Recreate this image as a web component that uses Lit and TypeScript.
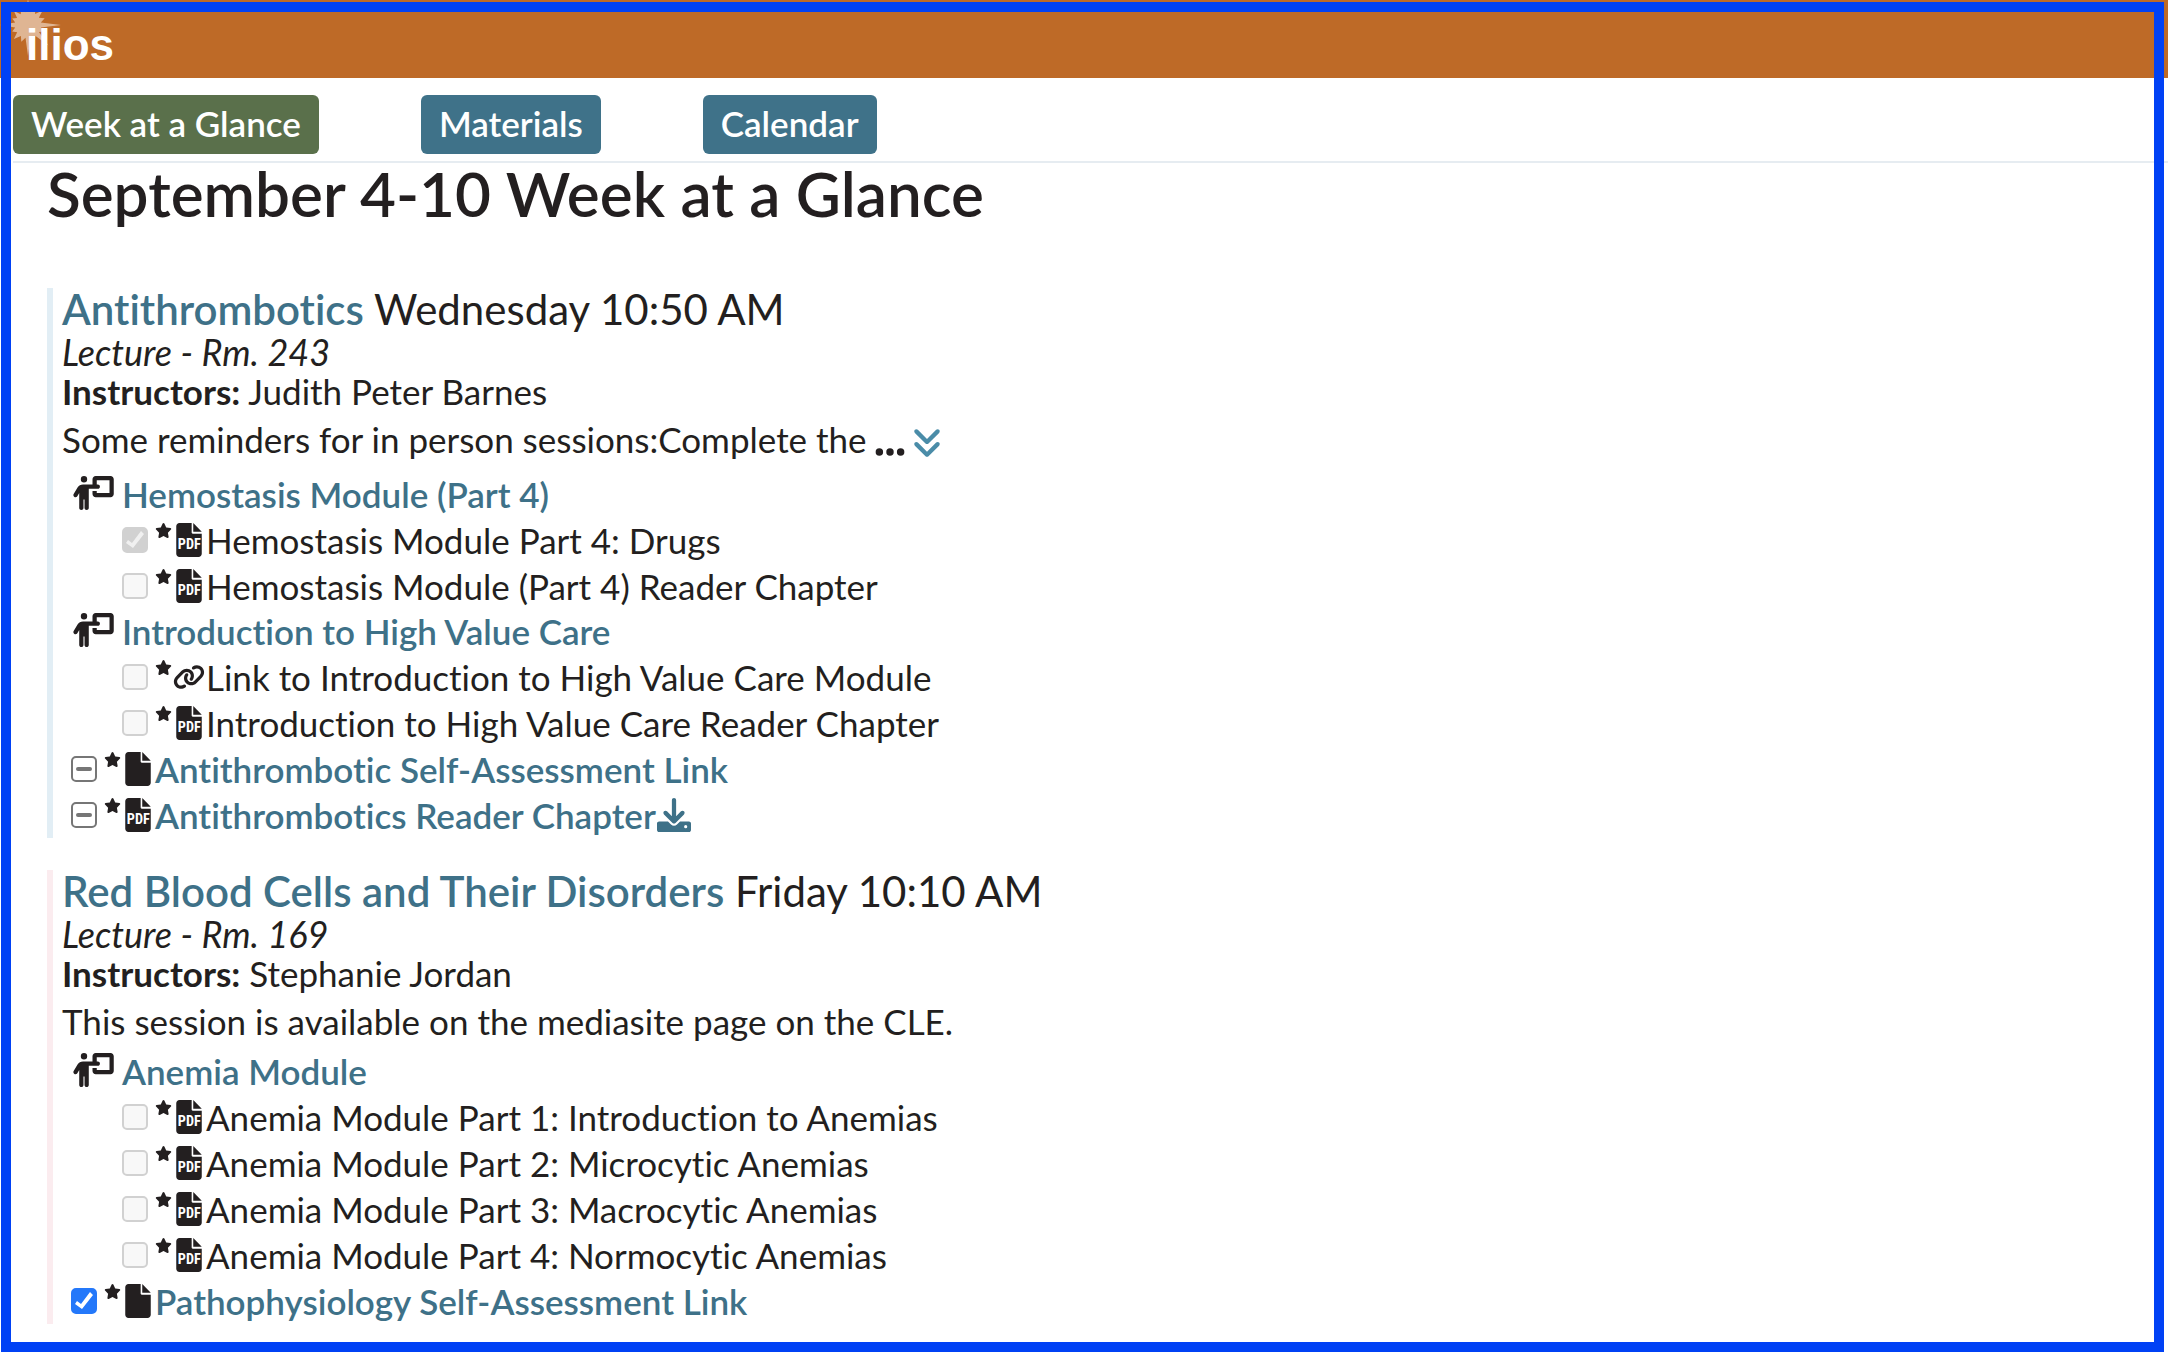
import { LitElement, html, svg, css, nothing } from "lit";
import { customElement, property } from "lit/decorators.js";

type CheckState = "off" | "on" | "mixed";
type FileKind = "pdf" | "link" | "file";

interface Material {
  title: string;
  kind: FileKind;
  state: CheckState;
  download?: boolean;
}

interface Module {
  title: string;
  items: Material[];
}

interface Session {
  title: string;
  when: string;
  place: string;
  instructors: string;
  description: string;
  truncated: boolean;
  tone: "blue" | "pink";
  modules: Module[];
  materials: Material[];
}

const SESSIONS: Session[] = [
  {
    title: "Antithrombotics",
    when: "Wednesday 10:50 AM",
    place: "Lecture - Rm. 243",
    instructors: "Judith Peter Barnes",
    description: "Some reminders for in person sessions:Complete the",
    truncated: true,
    tone: "blue",
    modules: [
      {
        title: "Hemostasis Module (Part 4)",
        items: [
          { title: "Hemostasis Module Part 4: Drugs", kind: "pdf", state: "on" },
          { title: "Hemostasis Module (Part 4) Reader Chapter", kind: "pdf", state: "off" },
        ],
      },
      {
        title: "Introduction to High Value Care",
        items: [
          { title: "Link to Introduction to High Value Care Module", kind: "link", state: "off" },
          { title: "Introduction to High Value Care Reader Chapter", kind: "pdf", state: "off" },
        ],
      },
    ],
    materials: [
      { title: "Antithrombotic Self-Assessment Link", kind: "file", state: "mixed" },
      { title: "Antithrombotics Reader Chapter", kind: "pdf", state: "mixed", download: true },
    ],
  },
  {
    title: "Red Blood Cells and Their Disorders",
    when: "Friday 10:10 AM",
    place: "Lecture - Rm. 169",
    instructors: "Stephanie Jordan",
    description: "This session is available on the mediasite page on the CLE.",
    truncated: false,
    tone: "pink",
    modules: [
      {
        title: "Anemia Module",
        items: [
          { title: "Anemia Module Part 1: Introduction to Anemias", kind: "pdf", state: "off" },
          { title: "Anemia Module Part 2: Microcytic Anemias", kind: "pdf", state: "off" },
          { title: "Anemia Module Part 3: Macrocytic Anemias", kind: "pdf", state: "off" },
          { title: "Anemia Module Part 4: Normocytic Anemias", kind: "pdf", state: "off" },
        ],
      },
    ],
    materials: [{ title: "Pathophysiology Self-Assessment Link", kind: "file", state: "on" }],
  },
];

const FILE_BODY =
  "M48 0H232V144c0 8.8 7.2 16 16 16H384V464c0 26.5-21.5 48-48 48H48c-26.5 0-48-21.5-48-48V48C0 21.500 21.500 0 48 0zM256 0L384 132H256z";
const LINK =
  "M579.8 267.7c56.5-56.5 56.5-148 0-204.5c-50-50-128.8-56.5-186.3-15.400l-1.600 1.100c-14.400 10.300-17.700 30.300-7.400 44.600s30.300 17.700 44.600 7.400l1.600-1.100c32.100-22.900 76-19.300 103.800 8.600c31.500 31.500 31.500 82.500 0 114L422.300 334.800c-31.500 31.500-82.500 31.500-114 0c-27.900-27.900-31.500-71.800-8.600-103.800l1.100-1.600c10.300-14.400 6.900-34.400-7.400-44.600s-34.400-6.900-44.600 7.400l-1.100 1.600C206.500 251.200 213 330 263 380c56.500 56.500 148 56.500 204.500 0L579.800 267.700zM60.200 244.300c-56.500 56.500-56.500 148 0 204.500c50 50 128.800 56.500 186.300 15.400l1.600-1.100c14.400-10.300 17.700-30.300 7.400-44.600s-30.300-17.700-44.600-7.400l-1.600 1.100c-32.100 22.900-76 19.300-103.800-8.600C74 372 74 321 105.500 289.500L217.700 177.200c31.500-31.500 82.500-31.500 114 0c27.900 27.900 31.500 71.800 8.600 103.900l-1.100 1.600c-10.300 14.400-6.900 34.400 7.400 44.600s34.400 6.900 44.600-7.400l1.100-1.600C433.500 260.800 427 182 377 132c-56.500-56.500-148-56.500-204.500 0L60.200 244.300z";
const STAR =
  "M316.9 18C311.6 7 300.4 0 288.1 0s-23.4 7-28.8 18L195 150.3 51.4 171.5c-12 1.8-22 10.2-25.7 21.7s-.7 24.2 7.9 32.7L137.8 329 113.2 474.7c-2 12 3 24.2 12.9 31.3s23 8 33.8 2.3l128.3-68.5 128.3 68.5c10.8 5.7 23.9 4.9 33.8-2.3s14.9-19.3 12.9-31.3L438.5 329 542.7 225.9c8.6-8.5 11.7-21.2 7.9-32.7s-13.7-19.9-25.7-21.7L381.2 150.3 316.9 18z";
const PRESENTER =
  "M192 96a48 48 0 1 0 0-96 48 48 0 1 0 0 96zm-8 384V352h16V480c0 17.700 14.300 32 32 32s32-14.300 32-32V192h56 64 16c17.700 0 32-14.300 32-32s-14.300-32-32-32H384V64H576V256H384V224H320v48c0 26.500 21.500 48 48 48H592c26.500 0 48-21.500 48-48V48c0-26.500-21.500-48-48-48H368c-26.500 0-48 21.500-48 48v80H243.100 177.100c-33.700 0-64.900 17.700-82.300 46.600l-58.300 97c-9.100 15.100-4.200 34.800 10.900 43.900s34.800 4.200 43.900-10.900L120 256.900V480c0 17.700 14.300 32 32 32s32-14.300 32-32z";
const DOWNLOAD =
  "M288 32c0-17.700-14.300-32-32-32s-32 14.300-32 32V274.700l-73.400-73.400c-12.500-12.500-32.800-12.500-45.300 0s-12.500 32.800 0 45.300l128 128c12.500 12.500 32.800 12.500 45.300 0l128-128c12.500-12.500 12.500-32.800 0-45.300s-32.800-12.500-45.300 0L288 274.700V32zM32 352c-17.700 0-32 14.300-32 32v96c0 17.700 14.300 32 32 32H480c17.700 0 32-14.300 32-32V384c0-17.700-14.300-32-32-32H346.500l-45.300 45.300c-25 25-65.500 25-90.500 0L165.500 352H32zm400 56a24 24 0 1 1 0 48 24 24 0 1 1 0-48z";
const ELLIPSIS =
  "M8 256a56 56 0 1 1 112 0A56 56 0 1 1 8 256zm160 0a56 56 0 1 1 112 0 56 56 0 1 1-112 0zm216-56a56 56 0 1 1 0 112 56 56 0 1 1 0-112z";
const ANGLES_DOWN =
  "M246.6 470.6c-12.5 12.5-32.8 12.5-45.3 0l-160-160c-12.5-12.5-12.5-32.8 0-45.3s32.8-12.5 45.3 0L224 402.7 361.4 265.4c12.5-12.5 32.8-12.5 45.3 0s12.5 32.8 0 45.3l-160 160zm160-352l-160 160c-12.5 12.5-32.8 12.5-45.3 0l-160-160c-12.5-12.5-12.5-32.8 0-45.3s32.8-12.5 45.3 0L224 210.7 361.4 73.4c12.5-12.5 32.8-12.5 45.3 0s12.5 32.8 0 45.3z";

const icon = (cls: string, width: number, path: string) => html`
  <svg class=${cls} viewBox="0 0 ${width} 512" aria-hidden="true"><path fill="currentColor" d=${path} /></svg>
`;

/* Rays of the sunburst as [angle in degrees, length]. */
const RAYS: [number, number][] = [
  [0, 33], [22, 17], [45, 29], [68, 17], [90, 31], [112, 18], [135, 20], [158, 17],
  [180, 28], [202, 17], [225, 20], [248, 18], [270, 26], [292, 19], [315, 21], [338, 18],
];
const burst = RAYS.map(([deg, len]) => {
  const at = (a: number, r: number) =>
    `${(28 + r * Math.cos((a * Math.PI) / 180)).toFixed(1)},${(25 + r * Math.sin((a * Math.PI) / 180)).toFixed(1)}`;
  return `${at(deg, len)} ${at(deg + 11, 13)}`;
}).join(" ");

@customElement("material-row")
class MaterialRow extends LitElement {
  static styles = css`
    :host { display: flex; }
    .row { display: flex; align-items: center; height: 46px; line-height: 46px; white-space: nowrap; }
    .check {
      appearance: none; flex: none; box-sizing: border-box; width: 26px; height: 26px; margin: 0;
      border: 2px solid #767676; border-radius: 5px; background: #fff; display: grid;
    }
    .check::before { content: ""; grid-area: 1 / 1; margin: -2px; }
    .check:checked { background: #2478fa; border-color: #2478fa; }
    .check:checked::before {
      background: #fff;
      clip-path: polygon(4px 16px, 6px 13px, 10px 16px, 19px 4px, 22px 7px, 11px 21px);
    }
    .check:indeterminate::before { background: #767676; margin: 9px 3px; border-radius: 2px; }
    .check:disabled { border-color: #d1d1d1; background: #f8f8f8; }
    .check:disabled:checked { background: #d1d1d1; }
    .check:disabled:checked::before { background: #f0f0f0; }
    .star { width: 17px; height: 15px; margin: 6px 1px 0 7px; align-self: flex-start; flex: none; }
    .kind { width: 32px; height: 34px; margin-right: 1px; flex: none; }
    .pdf { font: bold 215px "Roboto Condensed", "Liberation Sans", sans-serif; fill: #fff; }
    .download { width: 34px; height: 34px; display: block; }
    a { color: #3e7188; text-decoration: none; font-weight: 600; }
    a.save { margin-left: 1px; }
  `;
  @property({ attribute: false }) item!: Material;
  @property({ type: Boolean }) locked = false;

  private get kindIcon() {
    if (this.item.kind === "link") return icon("kind", 640, LINK);
    return html`<svg class="kind" viewBox="0 0 384 512" overflow="visible" aria-hidden="true">
      <path fill="currentColor" d=${FILE_BODY} />
      ${this.item.kind === "pdf" ? svg`<text class="pdf" x="196" y="385" text-anchor="middle">PDF</text>` : nothing}
    </svg>`;
  }

  render() {
    const { title, state, download } = this.item;
    return html`<div class="row">
      <input class="check" id="done" type="checkbox" .checked=${state === "on"}
        .indeterminate=${state === "mixed"} ?disabled=${this.locked} aria-labelledby="name" />
      ${icon("star", 576, STAR)}${this.kindIcon}
      ${this.locked
        ? html`<label id="name" for="done">${title}</label>`
        : html`<a id="name" href="#">${title}</a>`}
      ${download ? html`<a class="save" href="#" aria-label="Download">${icon("download", 512, DOWNLOAD)}</a>` : nothing}
    </div>`;
  }
}

@customElement("session-card")
class SessionCard extends LitElement {
  static styles = css`
    :host { display: block; }
    .card { border-left: 6px solid #e2eef5; padding-left: 9px; }
    .pink { border-color: #fbecef; }
    h2 { margin: 0; font-size: 42px; line-height: 42px; font-weight: 400; }
    a { color: #3e7188; text-decoration: none; font-weight: 600; }
    p { margin: 0; line-height: 39px; }
    .place { margin-top: 3px; font-size: 36px; font-style: italic; }
    .about { display: flex; align-items: flex-start; min-height: 48px; margin-top: 5px; line-height: 46px; }
    .dots { width: 30px; height: 34px; margin: 19px 0 0 8px; }
    .more { width: 30px; height: 50px; margin: 0 0 0 7px; padding: 9px 0 7px; border: 0; background: none; color: #4a8ca8; }
    .angles { display: block; width: 30px; height: 34px; }
    ul { list-style: none; margin: 0; padding: 0; }
    .list { margin-top: 3px; padding-left: 9px; }
    .items { padding-left: 51px; }
    .module { display: flex; align-items: center; gap: 8px; height: 45px; line-height: 45px; }
    .presenter { width: 43px; height: 34px; margin-bottom: 4px; }
  `;
  @property({ attribute: false }) session!: Session;

  render() {
    const s = this.session;
    return html`<section class="card ${s.tone}">
      <h2><a href="#">${s.title}</a> ${s.when}</h2>
      <p class="place">${s.place}</p>
      <p><b>Instructors:</b> ${s.instructors}</p>
      <div class="about">
        <span>${s.description}</span>
        ${s.truncated
          ? html`${icon("dots", 448, ELLIPSIS)}<button class="more" aria-label="Expand">${icon("angles", 448, ANGLES_DOWN)}</button>`
          : nothing}
      </div>
      <ul class="list">
        ${s.modules.map((m) => html`<li>
          <div class="module">${icon("presenter", 640, PRESENTER)}<a href="#">${m.title}</a></div>
          <ul class="items">
            ${m.items.map((i) => html`<li><material-row .item=${i} locked></material-row></li>`)}
          </ul>
        </li>`)}
        ${s.materials.map((i) => html`<li><material-row .item=${i}></material-row></li>`)}
      </ul>
    </section>`;
  }
}

@customElement("app-root")
class AppRoot extends LitElement {
  static styles = css`
    :host {
      display: block; min-height: 100vh; background: #fff; color: #231f20;
      font: 35px/46px Lato, "Open Sans", sans-serif; font-variant-ligatures: none;
    }
    .frame { position: fixed; inset: 2px 4px 2px 1px; border: 10px solid #0041f5; pointer-events: none; }
    header { height: 78px; background: #be6a27; }
    .logo { display: block; width: 140px; height: 78px; }
    .word { font: bold 44px "Liberation Sans", sans-serif; fill: #fff; }
    nav { display: flex; gap: 102px; margin-left: 13px; padding: 17px 0 7px; border-bottom: 2px solid #e6ecf1; }
    .tab {
      padding: 1px 18px 3px; border: 0; border-radius: 6px; background: #3f7289; color: #fff;
      font: 600 35px/55px Lato, "Open Sans", sans-serif;
    }
    .current { background: #5a704b; }
    main { display: flex; flex-direction: column; gap: 32px; padding: 0 47px; }
    h1 { margin: 0 0 33px; font-size: 62px; line-height: 60px; font-weight: 600; }
  `;

  render() {
    return html`
      <header>
        <svg class="logo" viewBox="0 0 140 78" role="img" aria-label="ilios">
          <polygon points=${burst} fill="#fff" opacity=".5" />
          <text class="word" x="26" y="60">ilios</text>
        </svg>
      </header>
      <nav>
        <button class="tab current">Week at a Glance</button>
        <button class="tab">Materials</button>
        <button class="tab">Calendar</button>
      </nav>
      <main>
        <h1>September 4-10 Week at a Glance</h1>
        ${SESSIONS.map((s) => html`<session-card .session=${s}></session-card>`)}
      </main>
      <div class="frame"></div>
    `;
  }
}
